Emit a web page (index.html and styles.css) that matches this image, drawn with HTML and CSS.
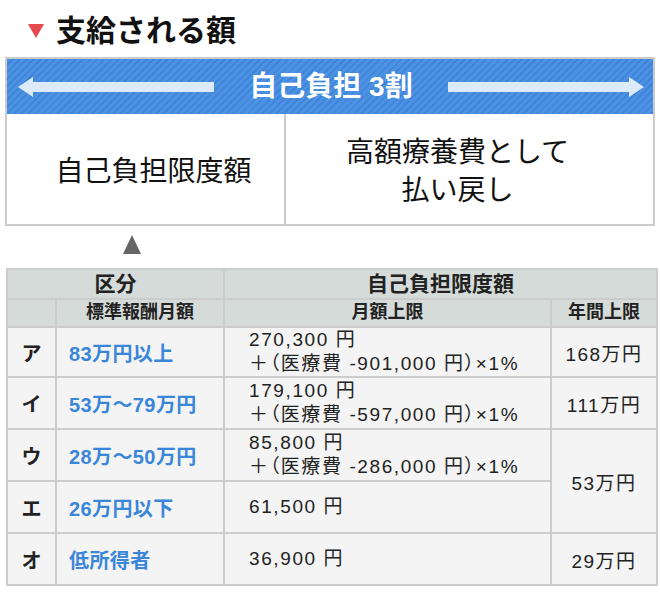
FILE: index.html
```html
<!DOCTYPE html>
<html lang="ja">
<head>
<meta charset="utf-8">
<title>支給される額</title>
<link rel="stylesheet" href="styles.css">
</head>
<body>
<div class="page">
  <h2 class="title"><span class="tri"></span><span>支給される額</span></h2>
  <div class="box">
    <div class="band">
      <svg class="arrow" width="196" height="20" viewBox="0 0 196 20"><path d="M196 5 H15 V0 L0 10 L15 20 V15 H196 Z"/></svg>
      <span class="band-text">自己負担 3割</span>
      <svg class="arrow" width="196" height="20" viewBox="0 0 196 20"><path d="M0 5 H181 V0 L196 10 L181 20 V15 H0 Z"/></svg>
    </div>
    <div class="cells">
      <div class="cell cell-left">自己負担限度額</div>
      <div class="cell cell-right">高額療養費として<br>払い戻し</div>
    </div>
  </div>
  <div class="marker"></div>
  <table class="tbl">
    <colgroup><col class="c1"><col class="c2"><col class="c3"><col class="c4"></colgroup>
    <thead>
      <tr class="h1"><th colspan="2">区分</th><th colspan="2">自己負担限度額</th></tr>
      <tr class="h2"><th></th><th>標準報酬月額</th><th>月額上限</th><th>年間上限</th></tr>
    </thead>
    <tbody>
      <tr class="r-first"><td class="lab">ア</td><td class="blue">83万円以上</td><td class="amt">270,300 円<br>＋（医療費 -901,000 円）×1%</td><td class="yr">168万円</td></tr>
      <tr><td class="lab">イ</td><td class="blue">53万～79万円</td><td class="amt">179,100 円<br>＋（医療費 -597,000 円）×1%</td><td class="yr">111万円</td></tr>
      <tr><td class="lab">ウ</td><td class="blue">28万～50万円</td><td class="amt">85,800 円<br>＋（医療費 -286,000 円）×1%</td><td class="yr" rowspan="2">53万円</td></tr>
      <tr><td class="lab">エ</td><td class="blue">26万円以下</td><td class="amt">61,500 円</td></tr>
      <tr><td class="lab">オ</td><td class="blue">低所得者</td><td class="amt">36,900 円</td><td class="yr">29万円</td></tr>
    </tbody>
  </table>
</div>
</body>
</html>
```
FILE: styles.css
```css
* { box-sizing: border-box; }
body {
  margin: 0;
  background: #fff;
  color: #111;
  font-family: "Liberation Sans", "Noto Sans CJK JP", sans-serif;
}
.title {
  margin: 10px 0 5px 28px;
  height: 42px;
  display: flex;
  align-items: center;
  gap: 12px;
  font-size: 30px;
  font-weight: 700;
  line-height: 42px;
}
.tri {
  width: 0;
  height: 0;
  border-left: 8px solid transparent;
  border-right: 8px solid transparent;
  border-top: 14px solid #e5484d;
}
.box {
  margin: 0 5px;
  border: 2px solid #ccc;
}
.band {
  height: 55px;
  display: flex;
  align-items: center;
  justify-content: space-between;
  padding: 0 9px 0 11px;
  background: repeating-linear-gradient(135deg, #4c91e2 0 3px, #3f85d9 3px 5px);
}
.arrow path { fill: #fff; fill-opacity: 0.82; }
.band-text {
  color: #fff;
  font-size: 28px;
  font-weight: 700;
  line-height: 1;
}
.cells {
  display: grid;
  grid-template-columns: 277px 1fr;
  height: 110px;
}
.cell {
  display: flex;
  align-items: center;
  justify-content: center;
  text-align: center;
  font-size: 28px;
  line-height: 38px;
  padding-top: 5px;
}
.cell-left { padding-left: 16px; }
.cell-right { border-left: 2px solid #ccc; padding-right: 24px; }
.marker {
  width: 0;
  height: 0;
  margin: 9px 0 14px 123px;
  border-left: 9px solid transparent;
  border-right: 9px solid transparent;
  border-bottom: 19px solid #666;
}
.tbl {
  border-collapse: collapse;
  table-layout: fixed;
  width: 650px;
  margin-left: 6px;
}
.c1 { width: 49px; }
.c2 { width: 168px; }
.c3 { width: 327px; }
.c4 { width: 106px; }
.tbl th, .tbl td {
  border: 2px solid #ccc;
  padding: 0;
}
.tbl th {
  background: #d5dbd8;
  color: #222;
  font-weight: 700;
  line-height: 1.2;
}
.h1 th { height: 30px; font-size: 21px; }
.h2 th { height: 28px; font-size: 18px; }
.tbl td {
  background: #f4f4f4;
  height: 52px;
  color: #222;
}
.tbl .r-first td { height: 50px; }
.tbl .lab { text-align: center; font-size: 20px; font-weight: 700; }
.tbl .blue {
  color: #3a86d8;
  font-size: 20px;
  font-weight: 700;
  padding-left: 12px;
  letter-spacing: 0.4px;
}
.tbl .amt {
  font-size: 19px;
  line-height: 24px;
  padding-left: 24px;
  letter-spacing: 1.6px;
  font-feature-settings: "palt";
}
.tbl .yr { text-align: center; font-size: 19px; letter-spacing: 1.5px; }
```
